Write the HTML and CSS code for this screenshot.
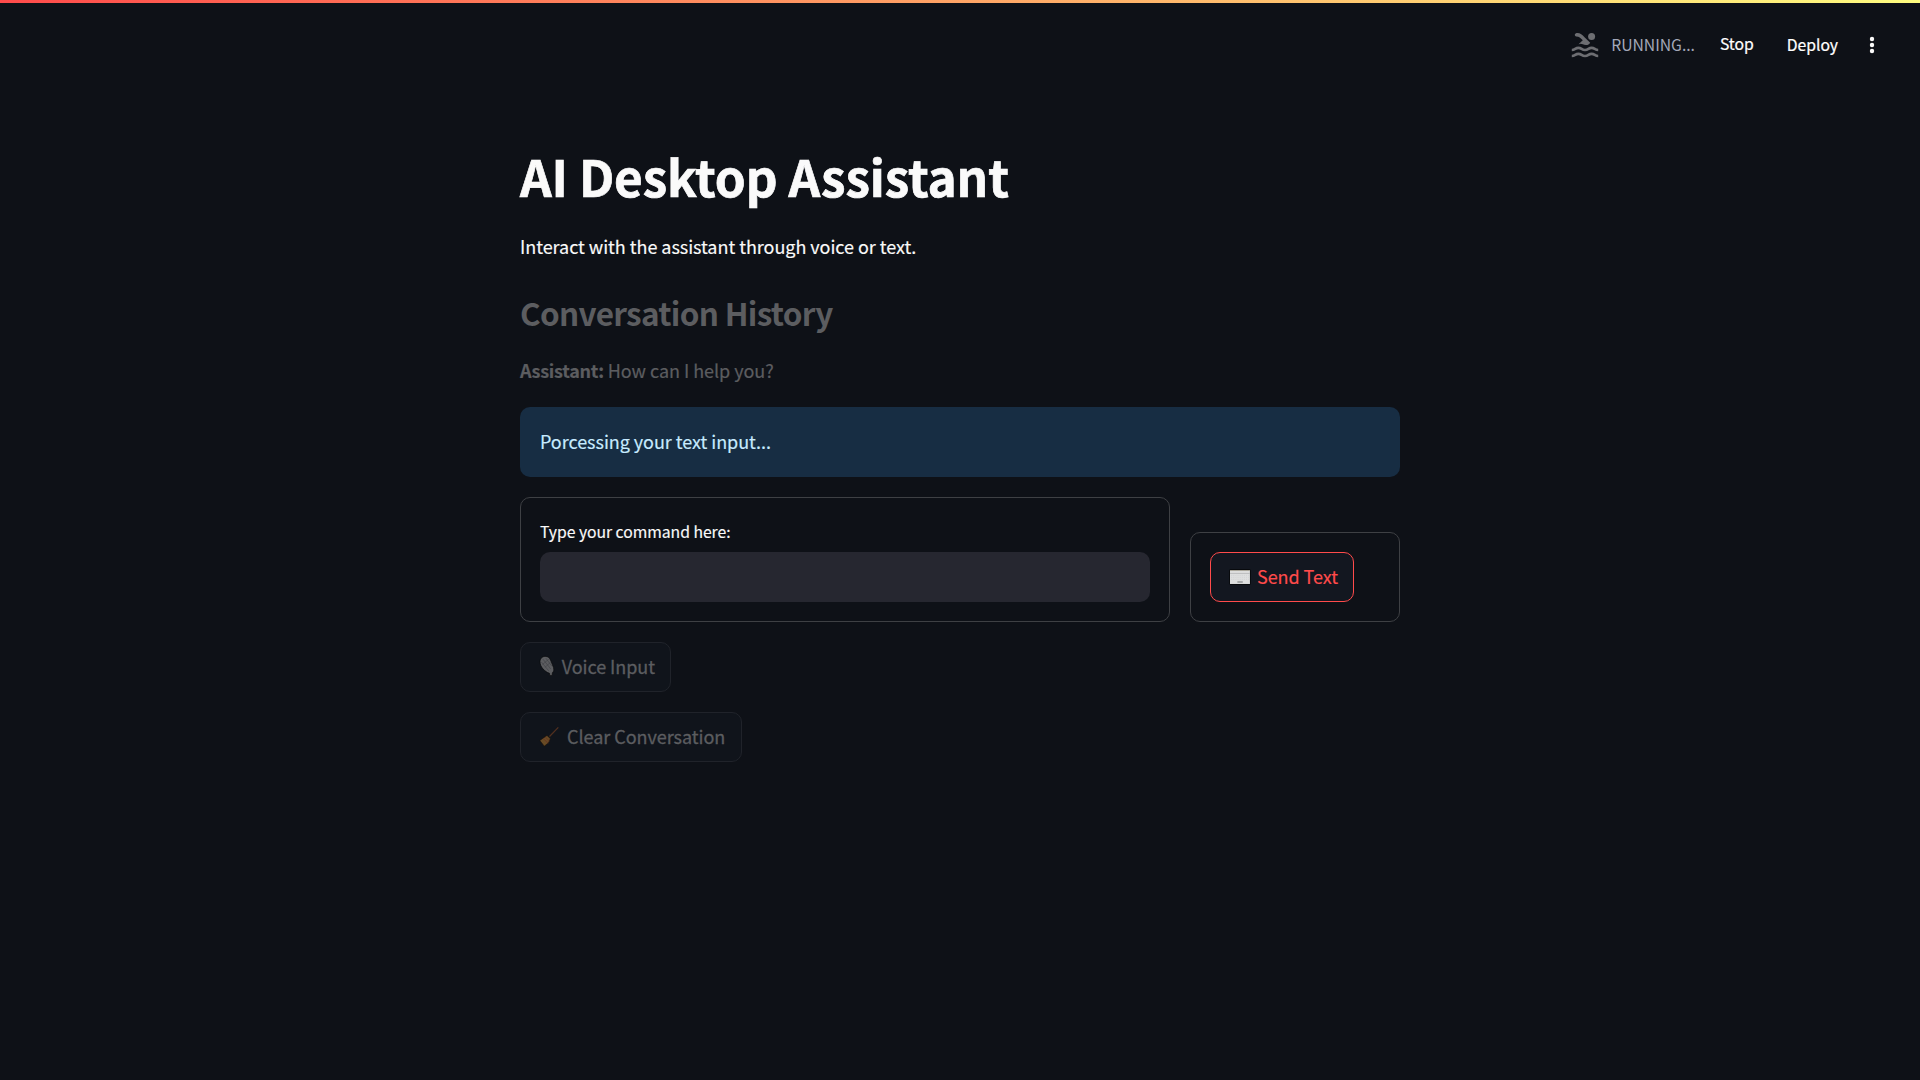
FILE: index.html
```html
<!DOCTYPE html>
<html lang="en">
<head>
<meta charset="utf-8">
<title>AI Desktop Assistant</title>
<link rel="stylesheet" href="styles.css">
</head>
<body>
<div class="decoration"></div>
<header class="toolbar">
  <svg class="swimmer" viewBox="0 0 28 26" fill="none" stroke="currentColor">
    <circle class="solid" cx="20.6" cy="4.5" r="3.5"/>
    <path class="solid" d="M5 1.2C9 .6 11 2.8 13.5 5.2L19.2 10.8C18.3 12.2 17 13.1 15 13.1C12 13.1 11.1 11.6 9 11.9L7.5 12.3L11.8 8.2C9.3 5.6 8 4.3 5 4.4C3.3 3.8 3.4 1.8 5 1.2Z"/>
    <path stroke-width="2.7" d="M.8 18C4.2 18 4.2 15.9 7.4 15.9S10.6 18 14 18S17.4 15.9 20.6 15.9S23.8 18 27.2 18M.8 24C4.2 24 4.2 21.9 7.4 21.9S10.6 24 14 24S17.4 21.9 20.6 21.9S23.8 24 27.2 24"/>
  </svg>
  <span class="status">RUNNING...</span>
  <button class="tool stop">Stop</button>
  <button class="tool deploy">Deploy</button>
  <svg class="dots" viewBox="0 0 6 18" fill="currentColor"><circle cx="3" cy="3" r="2.2"/><circle cx="3" cy="9" r="2.2"/><circle cx="3" cy="15" r="2.2"/></svg>
</header>
<main class="content">
  <h1 class="title">AI Desktop Assistant</h1>
  <p class="intro">Interact with the assistant through voice or text.</p>
  <h2 class="subtitle stale">Conversation History</h2>
  <p class="message stale"><b class="speaker">Assistant:</b> How can I help you?</p>
  <div class="alert">Porcessing your text input...</div>
  <form class="form-row">
    <div class="panel panel-wide">
      <label class="label" for="command">Type your command here:</label>
      <input class="field" id="command" type="text">
    </div>
    <div class="panel panel-narrow">
      <button class="button send" type="button">
        <svg class="keyboard" viewBox="0 0 22 16"><rect width="22" height="16" rx="2" fill="#080a0d"/><rect x="1" y="1" width="20" height="14" fill="#dedfdf"/><path d="M1 1.5H21" stroke="#aaa69a"/><path d="M1 4.4H21" stroke="#bbbcbd"/><path d="M2 6.4H20M2 8.4H20M2 10.4H20" stroke="#c9cbcc" stroke-width=".7" stroke-dasharray=".7 1.2"/><rect x="8.4" y="12" width="5.4" height="2" fill="#a6a8a9"/></svg>
        <span>Send Text</span>
      </button>
    </div>
  </form>
  <button class="button voice stale-button">
    <svg class="mic" viewBox="0 0 16 22"><path d="M1 6.5C1.2 2.5 4 1 7 1.2C10.5 1.4 11.5 4 12.6 7L14.8 12.5C15.5 15 15 17 13.6 18V20.6H10.8V18.5C6 17 1 12 1 6.5Z" fill="#5c5d60" stroke="#090a0c" stroke-width=".7"/><path d="M4 4L12 14M7 3L13 11M2.5 7L10 16M3.5 9.5L10 4M6 12.5L12 7" stroke="#3e4044" stroke-width=".6"/></svg>
    <span>Voice Input</span>
  </button>
  <button class="button clear stale-button">
    <svg class="broom" viewBox="0 0 20 21"><path d="M10.5 10.5L19.3 1.3" stroke="#53301f" stroke-width="1.2"/><path d="M.8 14.5L8 9.4L11.4 12.7L9.6 16.8L5.3 20.2Z" fill="#684b25" stroke="#15100b" stroke-width=".6"/><path d="M6 10.8L10.4 15M4 12.4L9.2 17.3" stroke="#673021" stroke-width=".8"/></svg>
    <span>Clear Conversation</span>
  </button>
</main>
</body>
</html>
```

FILE: styles.css
```css
* { box-sizing: border-box; }
body { margin: 0; height: 1080px; overflow: hidden; background: #0e1117; color: #fafafa; font: 18px/30px "Noto Sans CJK JP", sans-serif; letter-spacing: -.04px; }
.decoration { height: 3px; background: linear-gradient(90deg, #ff4b4b, #fffd80); }
.toolbar { height: 84px; display: flex; align-items: center; padding-right: 45px; justify-content: flex-end; font-size: 15.75px; }
.swimmer { width: 28px; height: 26px; margin-right: 12px; color: #6d6e72; }
.solid { fill: currentColor; stroke: none; }
.status { color: #a3a8b8; margin-right: 25px; }
.tool { padding: 0; border: 0; background: none; color: #fff; font: inherit; letter-spacing: inherit; -webkit-text-stroke: .2px; }
.stop { margin-right: 33px; padding-bottom: 2px; }
.deploy { margin-right: 31px; }
.dots { width: 6px; height: 18px; }
.content { width: 880px; margin: 0 auto; display: flex; flex-direction: column; align-items: flex-start; padding-top: 56px; }
.title, .intro, .subtitle, .message { margin: 0; }
.title { font-size: 49.5px; line-height: 66px; font-weight: 700; height: 88px; letter-spacing: -.14px; -webkit-text-stroke: .7px; }
.intro { height: 59px; -webkit-text-stroke: .15px; }
.subtitle { font-size: 31.5px; line-height: 44px; height: 65px; font-weight: 700; letter-spacing: -.7px; }
.message { height: 52px; letter-spacing: -.04px; -webkit-text-stroke: .2px; }
.speaker { letter-spacing: -.28px; }
.stale { color: #5c5d60; }
.alert { width: 100%; height: 70px; padding: 19px 20px; border-radius: 10px; background: #172d43; color: #c7ebff; -webkit-text-stroke: .15px; }
.form-row { width: 100%; display: flex; align-items: flex-end; gap: 20px; margin: 20px 0; }
.panel { border: 1px solid #3e4044; border-radius: 10px; padding: 19px; }
.panel-wide { width: 650px; height: 125px; }
.panel-narrow { width: 210px; height: 90px; }
.label { display: block; font-size: 15.75px; height: 35px; line-height: 30px; -webkit-text-stroke: .15px; }
.field { display: block; width: 100%; height: 50px; border: 0; border-radius: 10px; background: #262730; }
.button { height: 50px; display: flex; align-items: center; border: 1px solid; border-radius: 10px; background: #131720; font: inherit; letter-spacing: inherit; padding: 0 15px 2px; white-space: nowrap; -webkit-text-stroke: .15px; }
.send { width: 144px; color: #ff4b4b; }
.keyboard { width: 22px; height: 16px; margin: 1px 6px 0 3px; }
.stale-button { color: #5c5d60; border-color: #20232a; background: #10141b; padding-left: 18px; -webkit-text-stroke: .3px; }
.voice { width: 151px; margin-bottom: 20px; }
.mic { width: 16px; height: 22px; margin-right: 7px; }
.clear { width: 222px; }
.broom { width: 20px; height: 21px; margin: 1px 8px 0 0; }
```
